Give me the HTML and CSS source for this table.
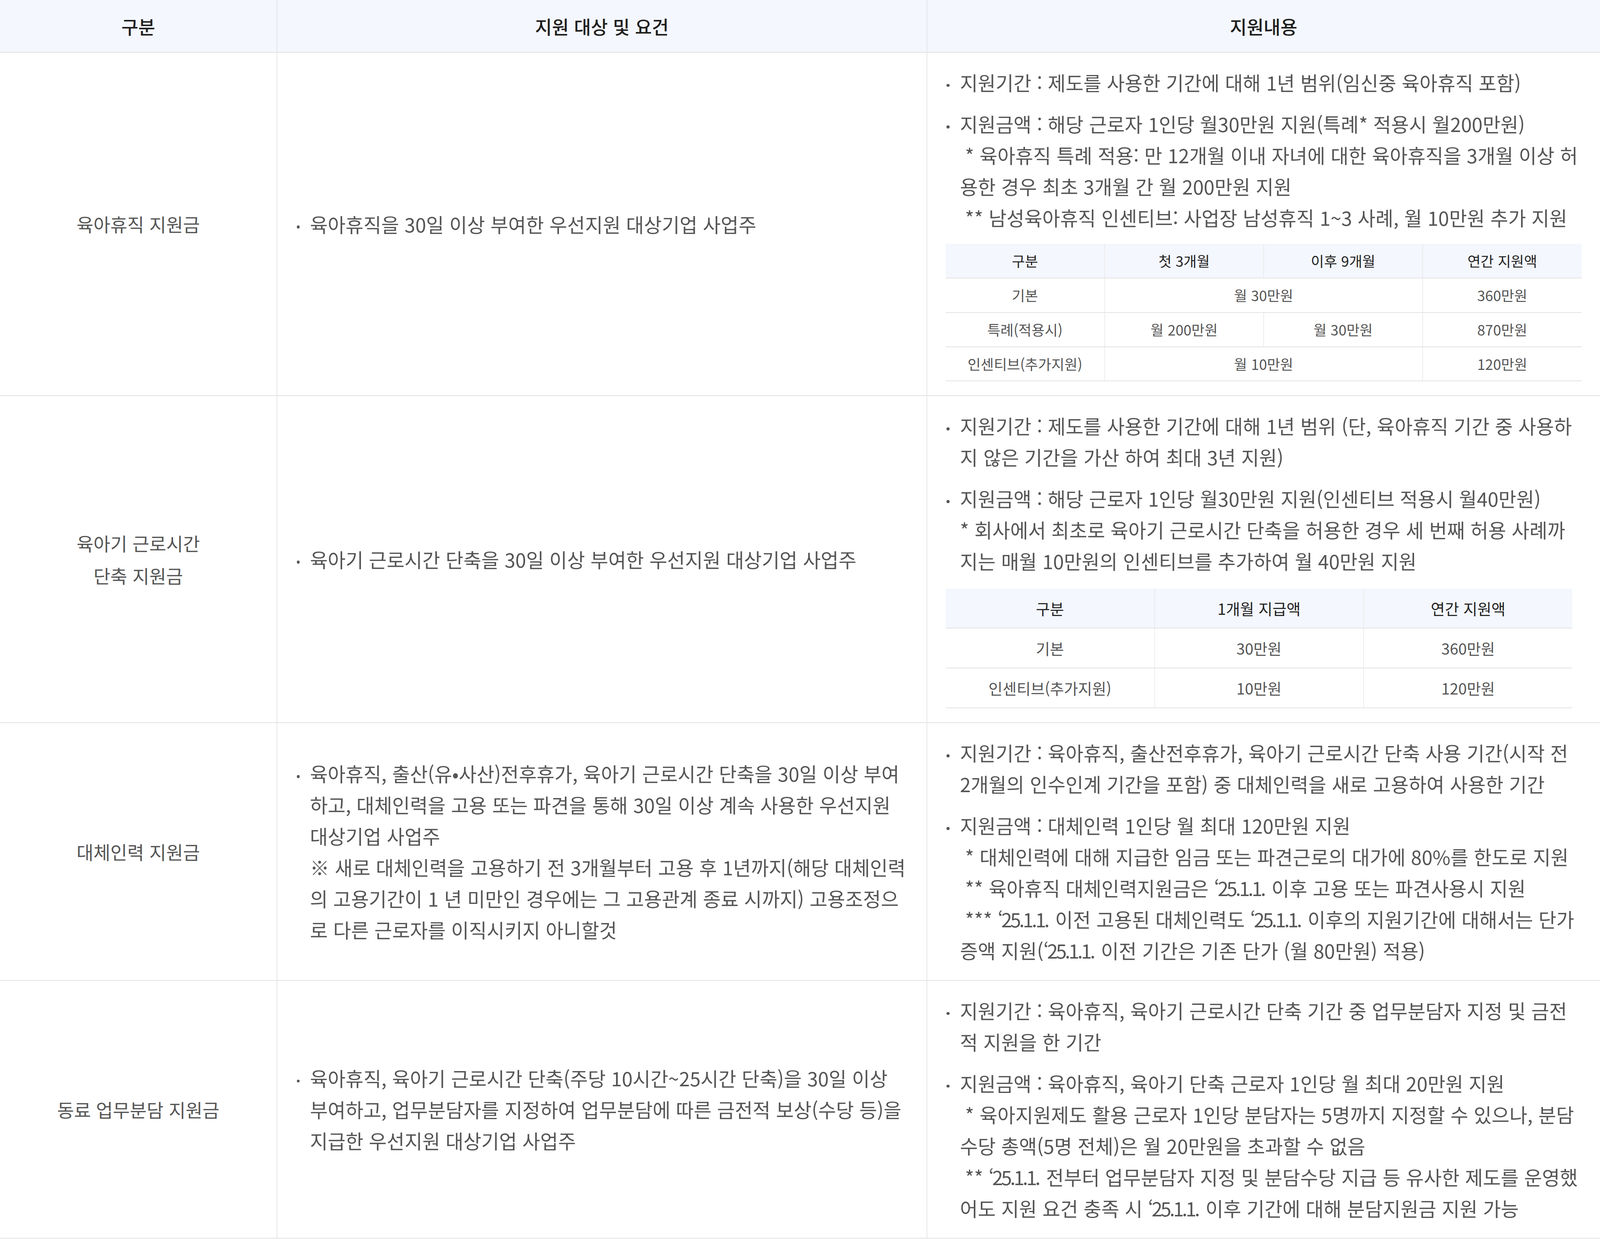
FILE: index.html
```html
<!DOCTYPE html>
<html lang="ko">
<head>
<meta charset="utf-8">
<title>육아지원 제도 지원금</title>
<link rel="stylesheet" href="styles.css">
</head>
<body>
<div class="page">
  <div class="grid" role="table">
    <div class="hd first" role="columnheader">구분</div>
    <div class="hd" role="columnheader">지원 대상 및 요건</div>
    <div class="hd" role="columnheader">지원내용</div>

    <div class="cell name first">육아휴직 지원금</div>
    <div class="cell req"><ul class="dots"><li>육아휴직을 30일 이상 부여한 우선지원 대상기업 사업주</li></ul></div>
    <div class="cell detail">
      <ul class="dots">
        <li>지원기간 : 제도를 사용한 기간에 대해 1년 범위(임신중 육아휴직 포함)</li>
        <li>지원금액 : 해당 근로자 1인당 월30만원 지원(특례* 적용시 월200만원)<br><span class="note">* 육아휴직 특례 적용: 만 12개월 이내 자녀에 대한 육아휴직을 3개월 이상 허용한 경우 최초 3개월 간 월 200만원 지원</span><br><span class="note">** 남성육아휴직 인센티브: 사업장 남성휴직 1~3 사례, 월 10만원 추가 지원</span></li>
      </ul>
      <table class="sub sub4">
        <thead><tr><th>구분</th><th>첫 3개월</th><th>이후 9개월</th><th>연간 지원액</th></tr></thead>
        <tbody>
          <tr><td>기본</td><td colspan="2">월 30만원</td><td>360만원</td></tr>
          <tr><td>특례(적용시)</td><td>월 200만원</td><td>월 30만원</td><td>870만원</td></tr>
          <tr><td>인센티브(추가지원)</td><td colspan="2">월 10만원</td><td>120만원</td></tr>
        </tbody>
      </table>
    </div>

    <div class="cell name first">육아기 근로시간<br>단축 지원금</div>
    <div class="cell req"><ul class="dots"><li>육아기 근로시간 단축을 30일 이상 부여한 우선지원 대상기업 사업주</li></ul></div>
    <div class="cell detail">
      <ul class="dots">
        <li>지원기간 : 제도를 사용한 기간에 대해 1년 범위 (단, 육아휴직 기간 중 사용하지 않은 기간을 가산 하여 최대 3년 지원)</li>
        <li>지원금액 : 해당 근로자 1인당 월30만원 지원(인센티브 적용시 월40만원)<br>* 회사에서 최초로 육아기 근로시간 단축을 허용한 경우 세 번째 허용 사례까지는 매월 10만원의 인센티브를 추가하여 월 40만원 지원</li>
      </ul>
      <table class="sub sub3">
        <thead><tr><th>구분</th><th>1개월 지급액</th><th>연간 지원액</th></tr></thead>
        <tbody>
          <tr><td>기본</td><td>30만원</td><td>360만원</td></tr>
          <tr><td>인센티브(추가지원)</td><td>10만원</td><td>120만원</td></tr>
        </tbody>
      </table>
    </div>

    <div class="cell name first">대체인력 지원금</div>
    <div class="cell req"><ul class="dots"><li>육아휴직, 출산(유•사산)전후휴가, 육아기 근로시간 단축을 30일 이상 부여하고, 대체인력을 고용 또는 파견을 통해 30일 이상 계속 사용한 우선지원 대상기업 사업주<br>※ 새로 대체인력을 고용하기 전 3개월부터 고용 후 1년까지(해당 대체인력의 고용기간이 1 년 미만인 경우에는 그 고용관계 종료 시까지) 고용조정으로 다른 근로자를 이직시키지 아니할것</li></ul></div>
    <div class="cell detail">
      <ul class="dots">
        <li>지원기간 : 육아휴직, 출산전후휴가, 육아기 근로시간 단축 사용 기간(시작 전 2개월의 인수인계 기간을 포함) 중 대체인력을 새로 고용하여 사용한 기간</li>
        <li>지원금액 : 대체인력 1인당 월 최대 120만원 지원<br><span class="note">* 대체인력에 대해 지급한 임금 또는 파견근로의 대가에 80%를 한도로 지원</span><br><span class="note">** 육아휴직 대체인력지원금은 <span class="date">‘25.1.1.</span> 이후 고용 또는 파견사용시 지원</span><br><span class="note">*** <span class="date">‘25.1.1.</span> 이전 고용된 대체인력도 <span class="date">‘25.1.1.</span> 이후의 지원기간에 대해서는 단가 증액 지원(<span class="date">‘25.1.1.</span> 이전 기간은 기존 단가 (월 80만원) 적용)</span></li>
      </ul>
    </div>

    <div class="cell name first">동료 업무분담 지원금</div>
    <div class="cell req"><ul class="dots"><li>육아휴직, 육아기 근로시간 단축(주당 10시간~25시간 단축)을 30일 이상 부여하고, 업무분담자를 지정하여 업무분담에 따른 금전적 보상(수당 등)을 지급한 우선지원 대상기업 사업주</li></ul></div>
    <div class="cell detail">
      <ul class="dots">
        <li>지원기간 : 육아휴직, 육아기 근로시간 단축 기간 중 업무분담자 지정 및 금전적 지원을 한 기간</li>
        <li>지원금액 : 육아휴직, 육아기 단축 근로자 1인당 월 최대 20만원 지원<br><span class="note">* 육아지원제도 활용 근로자 1인당 분담자는 5명까지 지정할 수 있으나, 분담수당 총액(5명 전체)은 월 20만원을 초과할 수 없음</span><br><span class="note">** <span class="date">‘25.1.1.</span> 전부터 업무분담자 지정 및 분담수당 지급 등 유사한 제도를 운영했어도 지원 요건 충족 시 <span class="date">‘25.1.1.</span> 이후 기간에 대해 분담지원금 지원 가능</span></li>
      </ul>
    </div>
  </div>
</div>
</body>
</html>
```

FILE: styles.css
```css
html, body {
  margin: 0;
  padding: 0;
  background: #ffffff;
}

*, *::before, *::after {
  box-sizing: border-box;
}

.page {
  zoom: 2.6122;
  width: 1568px;
  font-family: "Noto Sans CJK KR", "Noto Sans", sans-serif;
  color: #555555;
}

.grid {
  display: grid;
  grid-template-columns: 271px 637px 660px;
  width: 1568px;
}

.hd {
  height: 51.7px;
  display: flex;
  align-items: center;
  justify-content: center;
  background: #f4f7fd;
  color: #1f1f1f;
  font-size: 18px;
  font-weight: 500;
  border-bottom: 1px solid #e2e2e2;
  border-left: 1px solid #e4e6e9;
}

.cell {
  display: flex;
  flex-direction: column;
  justify-content: center;
  padding: 13.8px 18px;
  font-size: 19px;
  line-height: 30.6px;
  border-bottom: 1px solid #e2e2e2;
  border-left: 1px solid #e6e6e6;
}

.hd.first,
.cell.first {
  border-left: none;
}

.cell.name {
  align-items: center;
  text-align: center;
  padding: 13.8px 10px;
  font-size: 18px;
  line-height: 31.6px;
}

.cell.detail {
  justify-content: flex-start;
  font-size: 19.05px;
}

.dots {
  list-style: none;
  margin: 0;
  padding: 0;
}

.dots li {
  padding-left: 14px;
}

.dots li + li {
  margin-top: 10px;
}

.dots li::before {
  content: "";
  display: inline-block;
  width: 3px;
  height: 3px;
  border-radius: 50%;
  background: #555555;
  vertical-align: middle;
  margin-left: -13px;
  margin-right: 10px;
}

.note {
  padding-left: 5px;
}

.date {
  letter-spacing: -1.8px;
  padding-right: 1.8px;
}

.sub {
  border-collapse: collapse;
  table-layout: fixed;
  margin-top: 10.5px;
  text-align: center;
}

.sub th,
.sub td {
  padding: 0 4px;
  vertical-align: middle;
  border-bottom: 1px solid #e3e3e3;
  border-left: 1px solid #ececec;
}

.sub th:first-child,
.sub td:first-child {
  border-left: none;
}

.sub th {
  background: #f4f7fd;
  color: #222222;
  font-weight: 400;
}

.sub td {
  color: #555555;
}

.sub4 {
  width: 100%;
  font-size: 14px;
  line-height: 18px;
}

.sub4 th,
.sub4 td {
  height: 33.6px;
}

.sub3 {
  width: calc(100% - 9px);
  margin-top: 11.6px;
  font-size: 15px;
  line-height: 20px;
}

.sub3 th,
.sub3 td {
  height: 39px;
}
```
